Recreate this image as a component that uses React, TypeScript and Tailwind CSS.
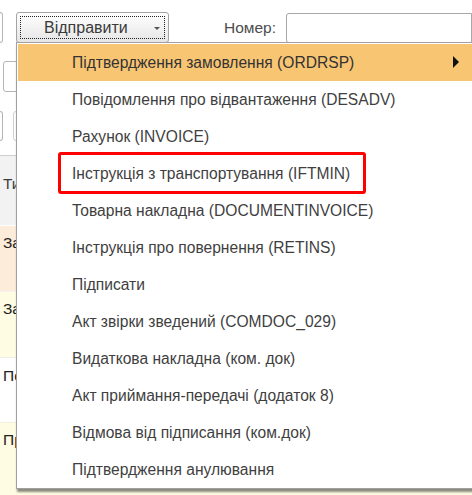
import React from "react";

const items = [
  "Підтвердження замовлення (ORDRSP)",
  "Повідомлення про відвантаження (DESADV)",
  "Рахунок (INVOICE)",
  "Інструкція з транспортування (IFTMIN)",
  "Товарна накладна (DOCUMENTINVOICE)",
  "Інструкція про повернення (RETINS)",
  "Підписати",
  "Акт звірки зведений (COMDOC_029)",
  "Видаткова накладна (ком. док)",
  "Акт приймання-передачі (додаток 8)",
  "Відмова від підписання (ком.док)",
  "Підтвердження анулювання",
];

function Cell({ text }: { text: string }) {
  return (
    <div className="w-[16px] overflow-hidden whitespace-nowrap pl-[3px]">{text}</div>
  );
}

export default function App() {
  return (
    <div
      className="relative w-[472px] h-[495px] overflow-hidden bg-white text-[#3f3f3f]"
      style={{ fontFamily: '"Liberation Sans", Arial, sans-serif' }}
    >
      {/* toolbar row 1 */}
      <div className="flex items-center h-[31px] mt-[12px]">
        <div className="w-[3px] h-[31px] border border-l-0 border-[#b5b5b5] rounded-r-[3px]" />
        <div className="ml-[13px] w-[153px] h-[31px] rounded-[3px] border border-[#a3a3a3] bg-gradient-to-b from-white to-[#e6e6e6] p-[3px]">
          <div className="w-full h-full border border-dotted border-[#222] flex items-center">
            <span className="ml-[23px] text-[16px] leading-none text-[#3a3a3a]">Відправити</span>
            <span className="ml-auto mr-[4px] w-0 h-0 border-l-[3px] border-r-[3px] border-t-[3px] border-l-transparent border-r-transparent border-t-[#555] mt-[2px]" />
          </div>
        </div>
        <span className="ml-[55px] text-[15.5px] leading-none text-[#4d4d4d]">Номер:</span>
        <div className="ml-[10px] flex-1 h-[30px] border border-[#a8a8a8] rounded-l-[3px] bg-white" />
      </div>
      {/* toolbar row 2 */}
      <div className="flex mt-[18px]">
        <div className="ml-[3px] w-[40px] h-[31px] border border-[#b5b5b5] rounded-[3px] bg-white" />
      </div>
      {/* toolbar row 3 */}
      <div className="flex mt-[19px] gap-[10px]">
        <div className="w-[3px] h-[30px] border border-l-0 border-[#b5b5b5] rounded-r-[3px]" />
        <div className="w-[40px] h-[30px] border border-[#d0d0d0] rounded-[3px]" />
      </div>
      {/* table */}
      <div className="mt-[14px] border-t border-[#cfcfcf] text-[15.5px] leading-[17px]">
        <div className="h-[70px] bg-[#f2f2f2] pt-[19px] border-b border-white text-[#3f3f3f]">
          <Cell text="Ти" />
        </div>
        <div className="h-[66px] bg-[#fcecd9] pt-[8px] text-[#222] border-b border-[#f3f3f3]">
          <Cell text="За" />
        </div>
        <div className="h-[66px] bg-[#fefde3] pt-[8px] text-[#222] border-b border-[#ececec]">
          <Cell text="За" />
        </div>
        <div className="h-[65px] bg-white pt-[9px] text-[#222] border-b border-[#f0f0e0]">
          <Cell text="По" />
        </div>
        <div className="h-[72px] bg-[#fefde3] pt-[8px] text-[#222]">
          <Cell text="Пр" />
        </div>
      </div>

      {/* dropdown menu */}
      <div className="absolute left-[16px] top-[42px] w-[470px] bg-white border border-[#a0a0a0] pt-[1px] pl-[1px] shadow-[1px_3px_2px_rgba(0,0,0,0.45)]">
        {items.map((t, i) => (
          <div
            key={t}
            className={
              "relative flex items-center h-[37px] pl-[54px] text-[15.6px] " +
              (i === 0 ? "bg-[#f8c573]" : "")
            }
          >
            <span className={i === 0 ? "text-[#333]" : ""}>{t}</span>
            {i === 0 && (
              <span className="absolute left-[435px] top-[12px] w-0 h-0 border-t-[6px] border-b-[6px] border-l-[6px] border-t-transparent border-b-transparent border-l-[#111]" />
            )}
          </div>
        ))}
      </div>

      {/* red highlight */}
      <div className="absolute left-[58px] top-[152px] w-[308px] h-[42px] border-[3px] border-[#ff0000] rounded-[3px]" />
    </div>
  );
}
